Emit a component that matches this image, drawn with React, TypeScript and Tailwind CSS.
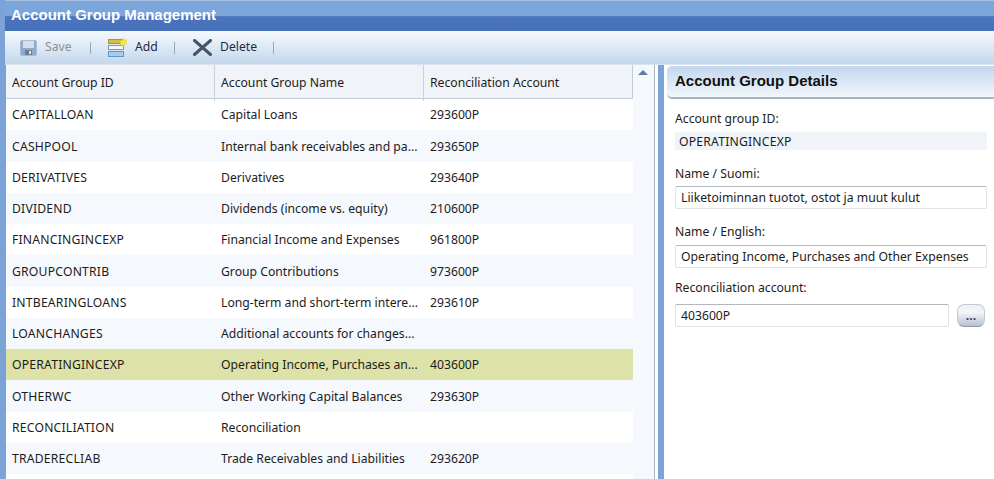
const rows = [
  ['CAPITALLOAN', 'Capital Loans', '293600P'],
  ['CASHPOOL', 'Internal bank receivables and pa...', '293650P'],
  ['DERIVATIVES', 'Derivatives', '293640P'],
  ['DIVIDEND', 'Dividends (income vs. equity)', '210600P'],
  ['FINANCINGINCEXP', 'Financial Income and Expenses', '961800P'],
  ['GROUPCONTRIB', 'Group Contributions', '973600P'],
  ['INTBEARINGLOANS', 'Long-term and short-term intere...', '293610P'],
  ['LOANCHANGES', 'Additional accounts for changes...', ''],
  ['OPERATINGINCEXP', 'Operating Income, Purchases an...', '403600P'],
  ['OTHERWC', 'Other Working Capital Balances', '293630P'],
  ['RECONCILIATION', 'Reconciliation', ''],
  ['TRADERECLIAB', 'Trade Receivables and Liabilities', '293620P'],
  ['', '', ''],
]

function SaveIcon() {
  return (
    <svg width="17" height="16" viewBox="0 0 17 16">
      <rect x="0.500" y="0.500" width="16" height="15" rx="1.500" fill="#8fa9cb" stroke="#a9bbd3" />
      <rect x="3" y="1" width="11" height="7" fill="#d5dfec" />
      <rect x="5" y="10" width="7" height="5" fill="#6f7d8e" />
      <rect x="9" y="11" width="2" height="3" fill="#dfe5ec" />
    </svg>
  )
}

function AddIcon() {
  return (
    <svg width="19" height="19" viewBox="0 0 19 19">
      <rect x="0.500" y="1.500" width="15" height="4" fill="#d2bd45" stroke="#a8963d" />
      <rect x="0.500" y="7.500" width="15" height="4" fill="#f4f8fc" stroke="#6f9bc8" />
      <rect x="0.500" y="13.500" width="15" height="5" fill="#a6cdec" stroke="#5f94c4" />
      <path d="M15 0l1 2.300 2.700-.8-1 2.500 1.300 1.500-2.300.5-.7 2.500-1.700-1.800-2.300.5.8-2.300-1.300-1.900 2.500.2z" fill="#f8ec3a" stroke="#e5c93a" strokeWidth="0.500" />
    </svg>
  )
}

function DeleteIcon() {
  return (
    <svg width="19" height="17" viewBox="0 0 19 17">
      <path d="M1.500 1.500L17.500 15.500M17.500 1.500L1.500 15.500" stroke="#465468" strokeWidth="3" strokeLinecap="round" />
    </svg>
  )
}

function Sep() {
  return <span className="block w-px h-[12px] bg-[#8fa9c6]" />
}

export default function App() {
  return (
    <div className="w-[994px] h-[479px] overflow-hidden flex flex-col bg-[#7ba3d8] pl-[5px] text-[12.2px] text-[#1c1c1c] font-['Noto_Sans','DejaVu_Sans',sans-serif]">
      <div className="h-[31px] shrink-0 pl-[6px] pb-[1px] flex items-center bg-[linear-gradient(#7ca5dc_0%,#7ca5dc_50%,#4a75bf_52%,#466fb9_100%)] border-t border-[#a6bfdc] text-white text-[15px] font-bold font-['Liberation_Sans',sans-serif]">
        Account Group Management
      </div>
      <div className="h-[33px] shrink-0 flex items-center pl-[15px] bg-[linear-gradient(#f6f9fd,#c4d7ec)]">
        <SaveIcon />
        <span className="ml-[8px] w-[27px] text-[#8b9098]">Save</span>
        <span className="ml-[18px]"><Sep /></span>
        <span className="ml-[17px]"><AddIcon /></span>
        <span className="ml-[8px] w-[23px] text-[#1d2a44]">Add</span>
        <span className="ml-[16px]"><Sep /></span>
        <span className="ml-[18px]"><DeleteIcon /></span>
        <span className="ml-[8px] w-[36px] text-[#1d2a44]">Delete</span>
        <span className="ml-[17px]"><Sep /></span>
      </div>
      <div className="flex-1 min-h-0 flex bg-white border-t border-[#dbe4ee]">
        <div className="w-[628px] shrink-0 border-l border-[#7ba3d8]">
          <div className="h-[34px] grid grid-cols-[209px_209px_209px] bg-[#f0f3f7] border-b border-[#c3ccd6] border-r border-r-[#c3ccd6]">
            <div className="pl-[6px] leading-[36px] border-r border-[#c9d1da]">Account Group ID</div>
            <div className="pl-[6px] leading-[36px] border-r border-[#c9d1da]">Account Group Name</div>
            <div className="pl-[6px] leading-[36px]">Reconciliation Account</div>
          </div>
          {rows.map((r, i) => (
            <div
              key={i}
              className={
                r[0] === 'OPERATINGINCEXP'
                  ? 'h-[31.25px] pt-[2px] grid grid-cols-[209px_209px_209px] items-center bg-[#dde2a8]'
                  : i % 2 === 0
                    ? 'h-[31.25px] pt-[2px] grid grid-cols-[209px_209px_209px] items-center bg-white'
                    : 'h-[31.25px] pt-[2px] grid grid-cols-[209px_209px_209px] items-center bg-[#f5f8fd]'
              }
            >
              <div className="pl-[6px] tracking-[0.2px]">{r[0]}</div>
              <div className="pl-[6px] whitespace-nowrap">{r[1]}</div>
              <div className="pl-[6px]">{r[2]}</div>
            </div>
          ))}
        </div>
        <div className="w-[22px] shrink-0 bg-[#f5f8fd] border-r border-[#aab4bf] flex justify-center pr-[2px] pt-[5px]">
          <span className="w-0 h-0 border-x-[5px] border-x-transparent border-b-[5px] border-b-[#5d7da3]" />
        </div>
        <div className="w-[3px] shrink-0 bg-white" />
        <div className="w-[6px] shrink-0 bg-[#7ba3d8]" />
        <div className="flex-1 min-w-0 pl-[3px]">
          <div className="h-[33px] mt-[1px] pl-[8px] rounded-l-[5px] flex items-center bg-[linear-gradient(#c2d6ed,#f3f7fc)] border-b-2 border-[#a9b5c2] text-[15px] font-bold text-[#111] font-['Liberation_Sans',sans-serif]">
            Account Group Details
          </div>
          <div className="pl-[8px] pt-[9px]">
            <div className="h-[21px] leading-[21px]">Account group ID:</div>
            <div className="mt-[3px] h-[18px] leading-[19px] pl-[4px] tracking-[0.2px] bg-[#f0f4f9] w-[312px]">OPERATINGINCEXP</div>
            <div className="mt-[13px] h-[21px] leading-[21px]">Name / Suomi:</div>
            <div className="mt-[2px] h-[23px] leading-[22px] px-[5px] bg-white border border-[#dfe3e8] border-t-[#b4b8bd] rounded-[2px] w-[312px]">
              Liiketoiminnan tuotot, ostot ja muut kulut
            </div>
            <div className="mt-[12px] h-[21px] leading-[21px]">Name / English:</div>
            <div className="mt-[3px] h-[23px] leading-[22px] px-[5px] bg-white border border-[#dfe3e8] border-t-[#b4b8bd] rounded-[2px] w-[312px] whitespace-nowrap">
              Operating Income, Purchases and Other Expenses
            </div>
            <div className="mt-[9px] h-[21px] leading-[21px]">Reconciliation account:</div>
            <div className="mt-[6px] flex items-center">
              <div className="h-[23px] leading-[22px] px-[5px] bg-white border border-[#dfe3e8] border-t-[#b4b8bd] rounded-[2px] w-[274px]">403600P</div>
              <button className="ml-[8px] w-[28px] h-[23px] rounded-[7px] border border-[#c3c9d2] border-b-[#8f98a6] bg-[linear-gradient(#eef1f5,#f3f5f8_35%,#b9c2cf)] text-center font-bold leading-[22px] text-[#33456a]">
                ...
              </button>
            </div>
          </div>
        </div>
      </div>
    </div>
  )
}
